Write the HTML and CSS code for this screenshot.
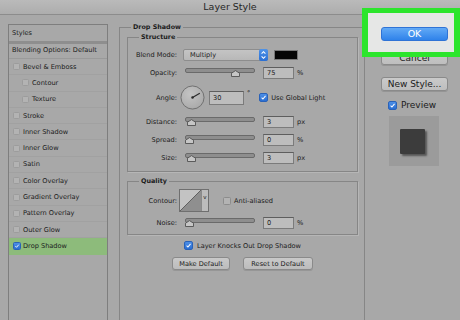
FILE: index.html
```html
<!DOCTYPE html>
<html lang="en">
<head>
    <meta charset="UTF-8">
    <meta name="viewport" content="width=device-width, initial-scale=1.0">
    <title>Layer Style</title>
    <link rel="stylesheet" href="styles.css">
</head>
<body>
    <div class="titlebar">Layer Style</div>
    <div class="main">
        <div class="styles-list">
            <div class="list-head">Styles</div>
            <div class="list-blend">Blending Options: Default</div>
            <div class="list-row"><span class="box"></span>Bevel &amp; Emboss</div>
            <div class="list-row sub"><span class="box"></span>Contour</div>
            <div class="list-row sub"><span class="box"></span>Texture</div>
            <div class="list-row"><span class="box"></span>Stroke</div>
            <div class="list-row"><span class="box"></span>Inner Shadow</div>
            <div class="list-row"><span class="box"></span>Inner Glow</div>
            <div class="list-row"><span class="box"></span>Satin</div>
            <div class="list-row"><span class="box"></span>Color Overlay</div>
            <div class="list-row"><span class="box"></span>Gradient Overlay</div>
            <div class="list-row"><span class="box"></span>Pattern Overlay</div>
            <div class="list-row"><span class="box"></span>Outer Glow</div>
            <div class="list-row active">
                <span class="box checked"><svg viewBox="0 0 10 10"><path class="tick" d="M2.3 5.2 L4.2 7.2 L7.9 2.8"/></svg></span>Drop Shadow
            </div>
        </div>

        <fieldset class="group outer">
            <legend>Drop Shadow</legend>

            <fieldset class="group inner structure">
                <legend>Structure</legend>
                <div class="row">
                    <span class="row-label">Blend Mode:</span>
                    <div class="select">Multiply
                        <span class="stepper"><svg viewBox="0 0 9 12"><path class="tick" d="M2.6 4.6 L4.5 2.7 L6.4 4.6 M2.6 7.4 L4.5 9.3 L6.4 7.4"/></svg></span>
                    </div>
                    <span class="swatch"></span>
                </div>
                <div class="row">
                    <span class="row-label">Opacity:</span>
                    <div class="slider"><div class="range"><span class="thumb" style="left: 75%"></span></div></div>
                    <span class="field">75</span>
                    <span class="unit">%</span>
                </div>
                <div class="row angle-row">
                    <span class="row-label">Angle:</span>
                    <svg class="dial" viewBox="0 0 26 26">
                        <defs>
                            <radialGradient id="dialFill" cx="40%" cy="35%" r="70%">
                                <stop offset="0" stop-color="#c4c4c4"/>
                                <stop offset="1" stop-color="#a9a9a9"/>
                            </radialGradient>
                        </defs>
                        <circle cx="13" cy="13" r="12" fill="url(#dialFill)" stroke="#6e6e6e"/>
                        <path d="M13 13 L20.6 8.6" stroke="#2a2a2a" stroke-width="1.2"/>
                        <circle cx="13" cy="13" r="1.3" fill="#2a2a2a"/>
                    </svg>
                    <span class="field angle-field">30</span>
                    <span class="degree">°</span>
                    <span class="check-blue"><svg viewBox="0 0 10 10"><path class="tick" d="M2.3 5.2 L4.2 7.2 L7.9 2.8"/></svg></span>
                    <span class="check-text">Use Global Light</span>
                </div>
                <div class="row">
                    <span class="row-label">Distance:</span>
                    <div class="slider"><div class="range"><span class="thumb" style="left: 3%"></span></div></div>
                    <span class="field">3</span>
                    <span class="unit">px</span>
                </div>
                <div class="row">
                    <span class="row-label">Spread:</span>
                    <div class="slider"><div class="range"><span class="thumb" style="left: 0%"></span></div></div>
                    <span class="field">0</span>
                    <span class="unit">%</span>
                </div>
                <div class="row">
                    <span class="row-label">Size:</span>
                    <div class="slider"><div class="range"><span class="thumb" style="left: 3%"></span></div></div>
                    <span class="field">3</span>
                    <span class="unit">px</span>
                </div>
            </fieldset>

            <fieldset class="group inner quality">
                <legend>Quality</legend>
                <div class="row contour-row">
                    <span class="row-label">Contour:</span>
                    <div class="contour">
                        <svg viewBox="0 0 21 21"><path d="M0 0 H21 V21 H0 Z" fill="#c3c3c3"/><path d="M0 21 L21 0 V21 Z" fill="#8f8f8f"/><path d="M0 21 L21 0" stroke="#4e4e4e" stroke-width="0.8" fill="none"/></svg>
                        <span class="contour-arrow">v</span>
                    </div>
                    <span class="box plain"></span>
                    <span class="check-text">Anti-aliased</span>
                </div>
                <div class="row">
                    <span class="row-label">Noise:</span>
                    <div class="slider"><div class="range"><span class="thumb" style="left: 0%"></span></div></div>
                    <span class="field">0</span>
                    <span class="unit">%</span>
                </div>
            </fieldset>

            <div class="knockout">
                <span class="check-blue"><svg viewBox="0 0 10 10"><path class="tick" d="M2.3 5.2 L4.2 7.2 L7.9 2.8"/></svg></span>
                <span class="check-text">Layer Knocks Out Drop Shadow</span>
            </div>
            <div class="defaults">
                <button class="small-btn make">Make Default</button>
                <button class="small-btn reset">Reset to Default</button>
            </div>
        </fieldset>

        <div class="actions">
            <div class="highlight"></div>
            <button class="btn ok">OK</button>
            <button class="btn cancel">Cancel</button>
            <button class="btn new-style">New Style...</button>
            <div class="preview-check">
                <span class="check-blue big"><svg viewBox="0 0 10 10"><path class="tick" d="M2.3 5.2 L4.2 7.2 L7.9 2.8"/></svg></span>
                <span>Preview</span>
            </div>
            <div class="preview-box"><div class="preview-square"></div></div>
        </div>
    </div>
</body>
</html>
```

FILE: styles.css
```css
* {
    box-sizing: border-box;
}
body {
    margin: 0;
    height: 320px;
    overflow: hidden;

    background-color: #a8a8a8;
    color: #1b1b1b;

    font-family: "DejaVu Sans", sans-serif;
    font-size: 6.6px;
}
.titlebar {
    height: 15px;
    line-height: 14px;

    border-bottom: 1px solid #8c8c8c;
    background: linear-gradient(#bababa, #adadad);

    text-align: center;
    font-size: 9.5px;
    color: #262626;
}
.main {
    display: flex;
    align-items: flex-start;

    padding: 8px 0 0 8px;
}

/* left list */
.styles-list {
    flex-shrink: 0;
    width: 100px;
    height: 296px;
    margin-top: 1px;

    border: 1px solid #7e7e7e;
    border-bottom: none;
}
.list-head {
    height: 19px;
    line-height: 16px;
    padding-left: 3px;

    border-bottom: 3px solid #8e8e8e;
}
.list-blend {
    height: 15px;
    line-height: 13px;
    padding-left: 3px;

    border-bottom: 1px solid #9a9a9a;
}
.list-row {
    display: flex;
    align-items: center;

    height: 16.3px;
    padding-left: 4px;

    border-bottom: 1px solid #a1a1a1;
}
.list-row.sub {
    padding-left: 13px;
}
.list-row.active {
    background-color: #8dbb7b;
    border-bottom-color: #8dbb7b;
}
.box {
    display: inline-block;
    flex-shrink: 0;

    width: 7px;
    height: 7px;
    margin-right: 3px;

    border: 1px solid #9c9c9c;
    border-radius: 1.5px;
    background-color: #b3b3b3;
}
.box.checked {
    width: 8px;
    height: 8px;
    margin-right: 2px;

    border-color: #2a62b8;
    background: linear-gradient(#4d8fe6, #2a6ed2);
}
.box svg,
.check-blue svg {
    display: block;
    width: 100%;
    height: 100%;
}
.tick {
    fill: none;
    stroke: #fff;
    stroke-width: 1.5;
}

/* group boxes */
.group {
    margin: 0;
    padding: 0;
    min-width: 0;

    border: 1px solid #868686;
    box-shadow: 1px 1px 0 #b6b6b6;
}
.group legend {
    padding: 0 2px;
    line-height: 8px;

    font-weight: bold;
    font-size: 6.4px;
}
.outer {
    flex-shrink: 0;
    width: 246px;
    height: 297px;
    margin-left: 11px;
    padding: 0 6px 0 7px;

    border-bottom: none;
    box-shadow: none;
}
.outer > legend {
    margin-left: 4px;
}
.inner > legend {
    margin-left: 11px;
}
.structure {
    margin-top: 2px;
    padding: 8px 0 7px 0;
}
.quality {
    margin-top: 5px;
    padding: 4px 0 5px 0;
}

/* rows */
.row {
    display: flex;
    align-items: center;

    height: 12px;
}
.row + .row {
    margin-top: 6px;
}
.quality .row + .row {
    margin-top: 5px;
}
.row-label {
    flex-shrink: 0;
    width: 49px;
    text-align: right;
}
.select {
    position: relative;
    display: flex;
    align-items: center;

    width: 85px;
    height: 12px;
    margin-left: 6px;
    padding-left: 6px;

    border: 1px solid #8d8d8d;
    border-radius: 2px;
    background: linear-gradient(#c4c4c4, #b8b8b8);
}
.stepper {
    position: absolute;
    right: -1px;
    top: -1px;

    width: 9px;
    height: 12px;

    border-radius: 2px;
    background: linear-gradient(#4f93e8, #2a6fd4);
}
.stepper svg {
    display: block;
    width: 9px;
    height: 12px;
}
.stepper .tick {
    stroke-width: 1.1;
}
.swatch {
    width: 24px;
    height: 10px;
    margin-left: 6px;

    border: 1px solid #777;
    background-color: #050505;
}
.slider {
    position: relative;
    flex-shrink: 0;

    width: 70px;
    height: 12px;
    margin-left: 8px;
}
.slider::before {
    content: "";
    position: absolute;
    left: 0;
    right: 0;
    top: 1px;

    height: 3px;

    border: 1px solid #6a6a6a;
    border-radius: 2px;
    background-color: #8e8e8e;
}
.range {
    position: absolute;
    left: 0;
    right: 9px;
    top: 3px;
    height: 7px;
}
.thumb {
    position: absolute;
    top: 0;

    width: 9px;
    height: 7px;

    background: no-repeat center / 9px 7px url("data:image/svg+xml,%3Csvg xmlns='http://www.w3.org/2000/svg' viewBox='0 0 9 7'%3E%3Cpath d='M0.5 6.5 V3.2 L4.5 0.6 L8.5 3.2 V6.5 Z' fill='%23c6c6c6' stroke='%23505050' stroke-width='0.9'/%3E%3C/svg%3E");
}
.field {
    flex-shrink: 0;

    width: 31px;
    height: 12px;
    margin-left: 8px;
    padding-left: 3px;
    line-height: 10px;

    border: 1px solid #7b7b7b;
    border-top-color: #5e5e5e;
    background-color: #bdbdbd;
}
.unit {
    margin-left: 3px;
}

/* angle row */
.angle-row {
    height: 25px;
}
.dial {
    flex-shrink: 0;
    width: 25px;
    height: 25px;
    margin-left: 3px;
}
.angle-field {
    width: 35px;
    height: 14px;
    line-height: 12px;
    margin-left: 4px;
}
.degree {
    align-self: flex-start;
    margin: 4px 0 0 3px;
}
.check-blue {
    display: inline-block;
    flex-shrink: 0;

    width: 9px;
    height: 9px;
    margin-left: 9px;

    border: 1px solid #2a62b8;
    border-radius: 2px;
    background: linear-gradient(#4d8fe6, #2a6ed2);
}
.check-text {
    margin-left: 3px;
}

/* quality */
.contour-row {
    height: 23px;
}
.contour {
    display: flex;
    flex-shrink: 0;

    width: 30px;
    height: 23px;
    margin-left: 2px;

    border: 1px solid #6f6f6f;
}
.contour svg {
    display: block;
    width: 21px;
    height: 21px;
}
.contour-arrow {
    flex: 1;
    padding-top: 4px;

    border-left: 1px solid #8a8a8a;
    background-color: #bcbcbc;

    text-align: center;
    font-size: 5.5px;
}
.box.plain {
    width: 8px;
    height: 8px;
    margin: 0 0 0 14px;

    border-color: #8c8c8c;
}

/* bottom of drop shadow group */
.knockout {
    display: flex;
    align-items: center;
    justify-content: center;

    height: 9px;
    margin-top: 6px;
}
.knockout .check-blue {
    margin-left: 0;
}
.knockout .check-text {
    margin-left: 4px;
}
.defaults {
    display: flex;
    justify-content: center;
    gap: 13px;

    margin-top: 7px;
}
.small-btn {
    height: 13px;
    padding: 0;

    border: 1px solid #8a8a8a;
    border-radius: 3px;
    background: linear-gradient(#c9c9c9, #bcbcbc);
    box-shadow: 0 1px 0 #969696;

    font-family: inherit;
    font-size: 6.6px;
    color: #1b1b1b;
}
.small-btn.make {
    width: 58px;
}
.small-btn.reset {
    width: 70px;
}

/* right column */
.actions {
    position: relative;
    display: flex;
    flex-direction: column;
    flex-shrink: 0;

    width: 67px;
    margin-left: 16px;
    padding-top: 4px;
}
.highlight {
    position: absolute;
    left: -19px;
    top: -15px;
    z-index: 1;

    width: 98px;
    height: 49px;

    border: 6px solid #2ce52c;
    border-top-width: 5px;
    border-bottom-width: 5px;
    background-color: #e6e7e6;
}
.btn {
    width: 67px;
    height: 14px;
    padding: 0;

    border: 1px solid #8a8a8a;
    border-radius: 3px;
    background: linear-gradient(#cacaca, #bebebe);
    box-shadow: 0 1px 0 #949494;

    font-family: inherit;
    font-size: 9px;
    line-height: 12px;
    color: #1b1b1b;
}
.btn.ok {
    position: relative;
    z-index: 2;

    border-color: #2f73d6;
    background: linear-gradient(#62aaf6, #2f82ea);
    box-shadow: none;

    font-size: 9.5px;
    color: #fff;
}
.btn.cancel {
    margin-top: 10px;
}
.btn.new-style {
    margin-top: 12px;
}
.preview-check {
    display: flex;
    align-items: center;

    height: 10px;
    margin-top: 9px;
    padding-left: 7px;

    font-size: 9px;
}
.check-blue.big {
    width: 9px;
    height: 9px;
    margin: 0 4px 0 0;
}
.preview-box {
    display: flex;
    align-items: center;
    justify-content: center;

    width: 50px;
    height: 50px;
    margin: 6px 0 0 8px;

    background-color: #9b9b9b;
}
.preview-square {
    width: 25px;
    height: 25px;
    margin: 0 3px 0 0;

    border-radius: 1px;
    background-color: #3c3c3c;
    box-shadow: 2px 2px 2px rgba(0, 0, 0, 0.45);
}
```
